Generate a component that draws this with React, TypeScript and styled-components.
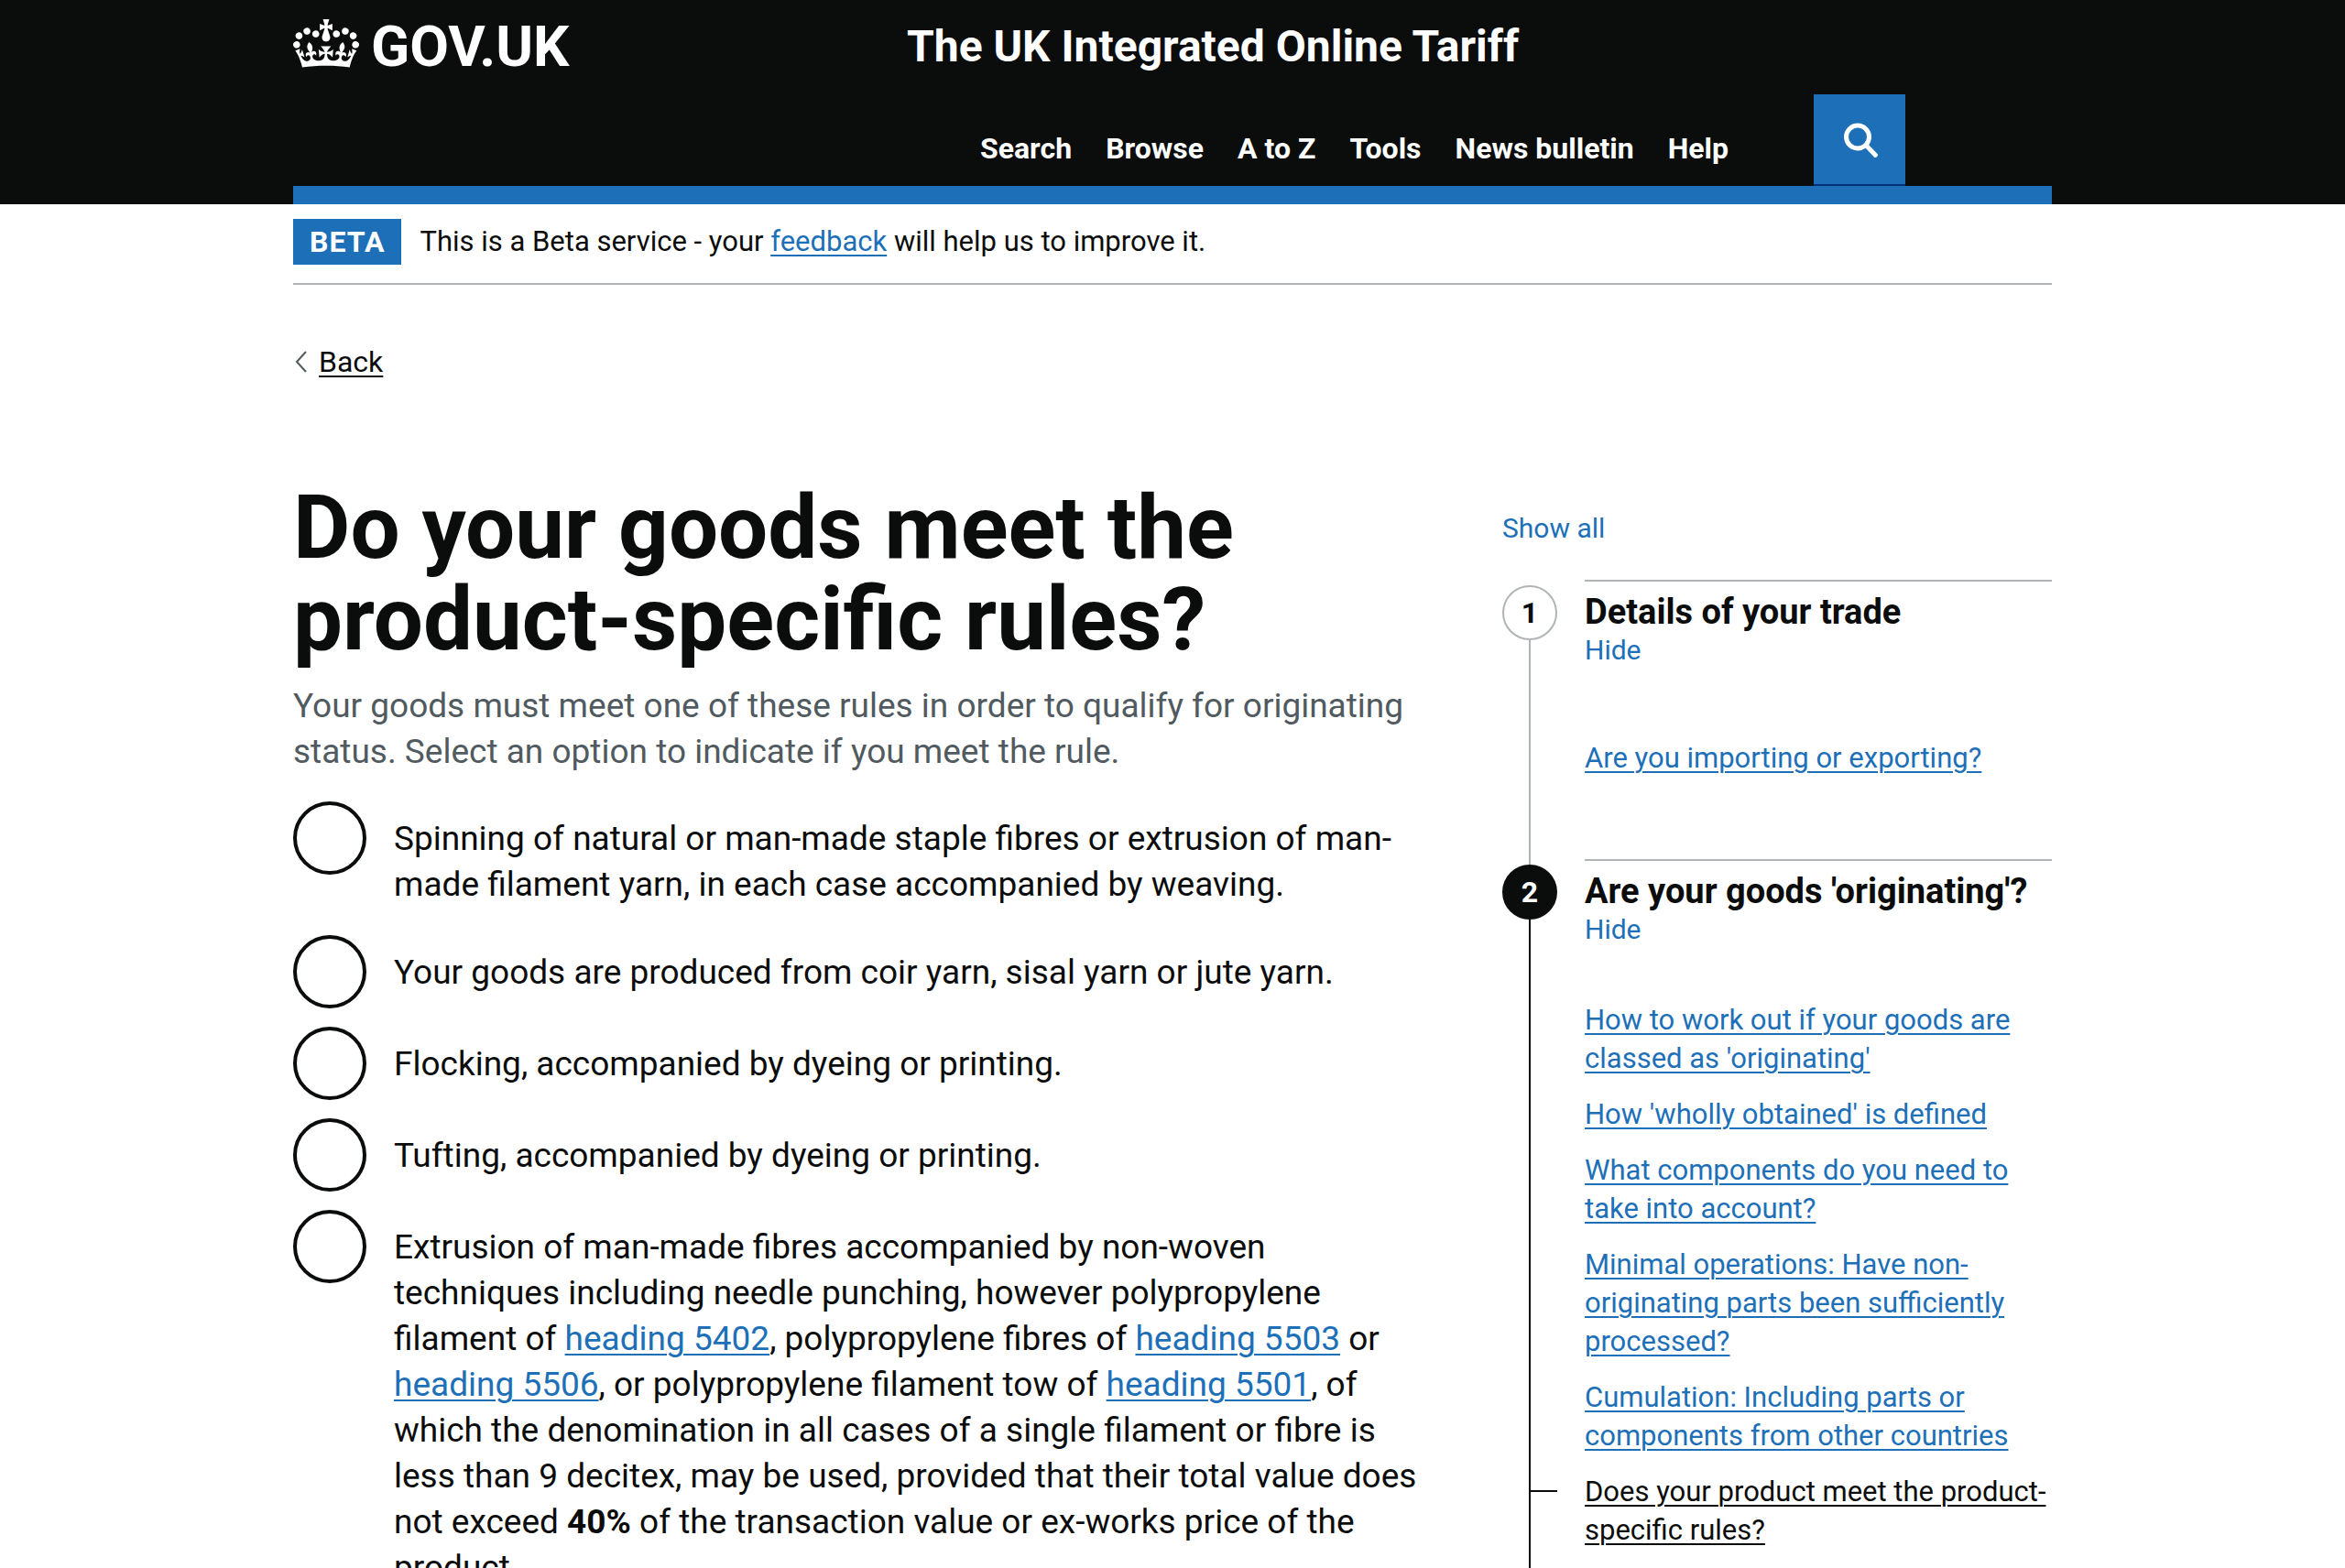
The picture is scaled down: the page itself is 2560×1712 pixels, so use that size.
import React from "react";
import styled, { createGlobalStyle } from "styled-components";

const colour = {
  black: "#0b0c0c",
  blue: "#1d70b8",
  darkBlue: "#003078",
  grey: "#b1b4b6",
  secondary: "#505a5f",
  white: "#ffffff",
};

const GlobalStyle = createGlobalStyle`
  *, *::before, *::after { box-sizing: border-box; }
  body {
    margin: 0;
    background: ${colour.white};
    color: ${colour.black};
    font-family: Roboto, "Liberation Sans", sans-serif;
    font-size: 31px;
    line-height: 42px;
  }
  h1, h2, p, ul, ol { margin: 0; padding: 0; }
  ul, ol { list-style: none; }
  button { font-family: inherit; border: 0; background: none; padding: 0; cursor: pointer; }
`;

const Container = styled.div`
  max-width: 1920px;
  margin: 0 auto;
`;

const Link = styled.a<{ $plain?: boolean }>`
  color: ${(p) => (p.$plain ? colour.black : colour.blue)};
  text-decoration: underline;
  text-decoration-thickness: 2px;
  text-underline-offset: 4px;
`;

/* Header */

const Header = styled.header`
  background: ${colour.black};
  color: ${colour.white};
`;

const HeaderBody = styled(Container)`
  display: grid;
  grid-template-columns: 670px 1fr;
  padding-top: 21px;
  border-bottom: 20px solid ${colour.blue};
`;

const Logo = styled.a`
  display: flex;
  align-items: flex-start;
  align-self: start;
  gap: 13px;
  color: inherit;
  text-decoration: none;
  font-size: 62px;
  line-height: 60px;
  font-weight: 700;
`;

const Crown = styled.svg`
  width: 72px;
  height: 53px;
  fill: currentColor;
`;

const ServiceName = styled.a`
  display: block;
  color: inherit;
  text-decoration: none;
  font-size: 48px;
  line-height: 60px;
  font-weight: 700;
`;

const NavRow = styled.div`
  display: flex;
  align-items: flex-end;
  justify-content: space-between;
  margin-top: 22px;
  padding: 0 160px 0 80px;
`;

const NavList = styled.ul`
  display: flex;
  gap: 37px;
  padding-bottom: 21px;
`;

const NavLink = styled.a`
  display: block;
  color: inherit;
  text-decoration: none;
  font-size: 32px;
  font-weight: 700;
  line-height: 40px;
  white-space: nowrap;
`;

const SearchButton = styled.button`
  display: flex;
  align-items: center;
  justify-content: center;
  width: 100px;
  height: 100px;
  background: ${colour.blue};
  color: ${colour.white};
  border-bottom: 2px solid ${colour.darkBlue};
`;

/* Phase banner and back link */

const PhaseBanner = styled.div`
  display: flex;
  align-items: center;
  gap: 20px;
  padding: 16px 0 20px;
  border-bottom: 2px solid ${colour.grey};
  line-height: 50px;
`;

const PhaseTag = styled.strong`
  padding: 0 18px;
  background: ${colour.blue};
  color: ${colour.white};
  font-size: 32px;
  font-weight: 700;
  letter-spacing: 1px;
  text-transform: uppercase;
`;

const BackLink = styled.a`
  display: inline-flex;
  align-items: center;
  gap: 12px;
  margin-top: 64px;
  color: ${colour.black};
  font-size: 32px;
  line-height: 40px;
  text-decoration: underline;
  text-decoration-thickness: 2px;
  text-underline-offset: 4px;
`;

const Chevron = styled.svg`
  width: 14px;
  height: 24px;
  margin-left: 2px;
  fill: none;
  stroke: ${colour.secondary};
  stroke-width: 2;
`;

/* Main columns */

const Columns = styled.div`
  display: grid;
  grid-template-columns: minmax(0, 21fr) minmax(0, 10fr);
  gap: 60px;
  padding: 108px 0 60px;
`;

const Heading = styled.h1`
  font-size: 96px;
  line-height: 100px;
  font-weight: 700;
`;

const Hint = styled.p`
  margin-top: 20px;
  color: ${colour.secondary};
  font-size: 37px;
  line-height: 50px;
`;

const RadioList = styled.div`
  display: flex;
  flex-direction: column;
  gap: 20px;
  margin-top: 29px;
`;

const RadioRow = styled.div`
  display: grid;
  grid-template-columns: 80px 1fr;
  gap: 30px;
  min-height: 80px;
`;

const Radio = styled.input`
  appearance: none;
  width: 80px;
  height: 80px;
  margin: 0;
  border: 4px solid ${colour.black};
  border-radius: 50%;
  background: ${colour.white};
  &:checked { box-shadow: inset 0 0 0 16px ${colour.white}; background: ${colour.black}; }
`;

const RadioLabel = styled.label`
  padding: 16px 30px 10px 0;
  font-size: 37px;
  line-height: 50px;
`;

/* Step navigation */

const Sidebar = styled.nav`
  padding-top: 33px;
`;

const TextButton = styled.button`
  display: block;
  color: ${colour.blue};
  font-size: 30px;
  line-height: 36px;
`;

const Steps = styled.ol`
  margin-top: 38px;
`;

const Step = styled.li`
  display: grid;
  grid-template-columns: 60px 1fr;
  gap: 30px;
`;

const Rail = styled.div`
  display: flex;
  flex-direction: column;
  align-items: center;
  margin: 6px 0 -6px;
`;

const StepNumber = styled.span<{ $active?: boolean }>`
  display: flex;
  align-items: center;
  justify-content: center;
  width: 60px;
  height: 60px;
  border: 2px solid ${(p) => (p.$active ? colour.black : colour.grey)};
  border-radius: 50%;
  background: ${(p) => (p.$active ? colour.black : colour.white)};
  color: ${(p) => (p.$active ? colour.white : colour.black)};
  font-size: 32px;
  font-weight: 700;
`;

const RailLine = styled.span<{ $active?: boolean }>`
  flex: 1;
  width: 2px;
  background: ${(p) => (p.$active ? colour.black : colour.grey)};
`;

const StepBody = styled.div`
  padding: 9px 0 89px;
  border-top: 2px solid ${colour.grey};
`;

const StepTitle = styled.h2`
  font-size: 38px;
  line-height: 48px;
  font-weight: 700;
`;

const StepLinks = styled.ul<{ $spaced?: boolean }>`
  display: flex;
  flex-direction: column;
  gap: 19px;
  padding-top: ${(p) => (p.$spaced ? 79 : 60)}px;
`;

const StepItem = styled.li<{ $current?: boolean }>`
  position: relative;
  &::before {
    content: "";
    display: ${(p) => (p.$current ? "block" : "none")};
    position: absolute;
    top: 19px;
    left: -60px;
    width: 30px;
    height: 2px;
    background: ${colour.black};
  }
`;

const navItems = ["Search", "Browse", "A to Z", "Tools", "News bulletin", "Help"];

const rules: React.ReactNode[] = [
  "Spinning of natural or man-made staple fibres or extrusion of man-made filament yarn, in each case accompanied by weaving.",
  "Your goods are produced from coir yarn, sisal yarn or jute yarn.",
  "Flocking, accompanied by dyeing or printing.",
  "Tufting, accompanied by dyeing or printing.",
  <>
    Extrusion of man-made fibres accompanied by non-woven techniques including needle punching,
    however polypropylene filament of <Link href="#5402">heading 5402</Link>, polypropylene fibres
    of <Link href="#5503">heading 5503</Link> or <Link href="#5506">heading 5506</Link>, or
    polypropylene filament tow of <Link href="#5501">heading 5501</Link>, of which the denomination
    in all cases of a single filament or fibre is less than 9 decitex, may be used, provided that
    their total value does not exceed <strong>40%</strong> of the transaction value or ex-works
    price of the product.
  </>,
];

const steps = [
  { title: "Details of your trade", active: false, links: ["Are you importing or exporting?"] },
  {
    title: "Are your goods 'originating'?",
    active: true,
    links: [
      "How to work out if your goods are classed as 'originating'",
      "How 'wholly obtained' is defined",
      "What components do you need to take into account?",
      "Minimal operations: Have non-originating parts been sufficiently processed?",
      "Cumulation: Including parts or components from other countries",
      "Does your product meet the product-specific rules?",
    ],
  },
];

const currentPage = "Does your product meet the product-specific rules?";

const CrownIcon = () => (
  <Crown viewBox="0 0 132 97" aria-hidden="true">
    <path d="M25 30.2c3.5 1.5 7.7-.2 9.1-3.7 1.5-3.6-.2-7.8-3.9-9.2-3.6-1.4-7.6.3-9.1 3.9-1.4 3.5.3 7.5 3.9 9zM9 39.5c3.6 1.5 7.8-.2 9.2-3.7 1.5-3.6-.2-7.8-3.9-9.1-3.6-1.5-7.6.2-9.1 3.8-1.4 3.5.3 7.5 3.8 9zM4.4 57.2c3.5 1.5 7.7-.2 9.1-3.8 1.5-3.6-.2-7.7-3.9-9.1-3.5-1.5-7.6.3-9.1 3.8-1.4 3.5.3 7.6 3.9 9.1zm38.3-21.4c3.5 1.5 7.7-.2 9.1-3.8 1.5-3.6-.2-7.7-3.9-9.1-3.6-1.5-7.6.3-9.1 3.8-1.3 3.6.4 7.7 3.9 9.1zm64.4-5.6c-3.6 1.5-7.8-.2-9.1-3.7-1.5-3.6.2-7.8 3.8-9.2 3.6-1.4 7.7.3 9.2 3.9 1.3 3.5-.4 7.5-3.9 9zm15.9 9.3c-3.6 1.5-7.7-.2-9.1-3.7-1.5-3.6.2-7.8 3.7-9.1 3.6-1.5 7.7.2 9.2 3.8 1.5 3.5-.3 7.5-3.8 9zm4.7 17.7c-3.6 1.5-7.8-.2-9.2-3.8-1.5-3.6.2-7.7 3.9-9.1 3.6-1.5 7.7.3 9.2 3.8 1.3 3.5-.4 7.6-3.9 9.1zM89.3 35.8c-3.6 1.5-7.8-.2-9.2-3.8-1.4-3.6.2-7.7 3.9-9.1 3.6-1.5 7.7.3 9.2 3.8 1.4 3.6-.3 7.7-3.9 9.1zM69.7 17.7l8.9 4.7V9.3l-8.9 2.8c-.2-.3-.5-.6-.9-.9L72.4 0H59.6l3.5 11.2c-.3.3-.6.5-.9.9l-8.8-2.8v13.1l8.8-4.7c.3.3.6.7.9.9l-5 15.4v.1c-.2.8-.4 1.6-.4 2.4 0 4.1 3.1 7.5 7 8.1h.2c.3 0 .7.1 1 .1.4 0 .7 0 1-.1h.2c4-.6 7.1-4.1 7.1-8.1 0-.8-.1-1.7-.4-2.4V34l-5.1-15.4c.4-.2.7-.6 1-.9zM66 92.8c16.9 0 32.8 1.1 47.1 3.2 4-16.9 8.9-26.7 14-33.5l-9.6-3.4c1 4.9 1.1 7.2 0 10.2-1.5-1.4-3-4.3-4.2-8.7L108.6 76c2.8-2 5-3.2 7.5-3.3-4.4 9.4-10 11.9-13.6 11.2-4.3-.8-6.3-4.6-5.6-7.9 1-4.7 5.7-5.9 8-.5 4.3-8.7-3-11.4-7.6-8.8 7.1-7.2 7.9-13.5 2.1-21.1-8 6.1-8.1 12.3-4.5 20.8-4.7-5.4-12.1-2.5-9.5 6.2 3.4-5.2 7.9-2 7.2 3.1-.6 4.3-6.4 7.8-13.5 7.2-10.3-.9-10.9-8-11.2-13.8 2.5-.5 7.1 1.8 11 7.3L80.2 60c-4.1 4.4-8 5.3-12.3 5.4 1.4-4.4 8-11.6 8-11.6H55.5s6.4 7.2 7.9 11.6c-4.2-.1-8-1-12.3-5.4l1.4 16.4c3.9-5.5 8.5-7.7 10.9-7.3-.3 5.8-.9 12.8-11.1 13.8-7.2.6-12.9-2.9-13.5-7.2-.7-5 3.8-8.3 7.1-3.1 2.7-8.7-4.6-11.6-9.4-6.2 3.7-8.5 3.6-14.7-4.6-20.8-5.8 7.6-5 13.9 2.2 21.1-4.7-2.6-11.9.1-7.7 8.8 2.3-5.5 7.1-4.2 8.1.5.7 3.3-1.3 7.1-5.7 7.9-3.5.7-9-1.8-13.5-11.2 2.5.1 4.7 1.3 7.5 3.3l-4.7-15.4c-1.2 4.4-2.7 7.2-4.3 8.7-1.1-3-.9-5.3 0-10.2l-9.5 3.4c5 6.9 9.9 16.7 14 33.5 14.8-2.1 30.8-3.2 47.7-3.2z" />
  </Crown>
);

export default function App() {
  return (
    <>
      <GlobalStyle />
      <Header>
        <HeaderBody>
          <Logo href="#home">
            <CrownIcon />
            GOV.UK
          </Logo>
          <div>
            <ServiceName href="#service">The UK Integrated Online Tariff</ServiceName>
            <NavRow>
              <NavList>
                {navItems.map((item) => (
                  <li key={item}>
                    <NavLink href="#nav">{item}</NavLink>
                  </li>
                ))}
              </NavList>
              <SearchButton type="button" aria-label="Search">
                <svg width="40" height="40" viewBox="0 0 40 40" fill="none" stroke="currentColor" strokeWidth="5">
                  <circle cx="18" cy="17.5" r="12.5" />
                  <path d="M27 26.5 39 39" />
                </svg>
              </SearchButton>
            </NavRow>
          </div>
        </HeaderBody>
      </Header>
      <Container>
        <PhaseBanner>
          <PhaseTag>Beta</PhaseTag>
          <span>
            This is a Beta service - your <Link href="#feedback">feedback</Link> will help us to
            improve it.
          </span>
        </PhaseBanner>
        <BackLink href="#back">
          <Chevron viewBox="0 0 14 24" aria-hidden="true">
            <path d="M12 1 2 12l10 11" />
          </Chevron>
          Back
        </BackLink>
        <Columns>
          <main>
            <Heading>Do your goods meet the product-specific rules?</Heading>
            <Hint>
              Your goods must meet one of these rules in order to qualify for originating status.
              Select an option to indicate if you meet the rule.
            </Hint>
            <RadioList>
              {rules.map((rule, i) => (
                <RadioRow key={i}>
                  <Radio type="radio" name="rule" id={`rule-${i}`} />
                  <RadioLabel htmlFor={`rule-${i}`}>{rule}</RadioLabel>
                </RadioRow>
              ))}
            </RadioList>
          </main>
          <Sidebar aria-label="Steps">
            <TextButton type="button">Show all</TextButton>
            <Steps>
              {steps.map((step, i) => (
                <Step key={step.title}>
                  <Rail>
                    <StepNumber $active={step.active}>{i + 1}</StepNumber>
                    <RailLine $active={step.active} />
                  </Rail>
                  <StepBody>
                    <StepTitle>{step.title}</StepTitle>
                    <TextButton type="button">Hide</TextButton>
                    <StepLinks $spaced={!step.active}>
                      {step.links.map((text) => (
                        <StepItem key={text} $current={text === currentPage}>
                          <Link href="#step" $plain={text === currentPage}>
                            {text}
                          </Link>
                        </StepItem>
                      ))}
                    </StepLinks>
                  </StepBody>
                </Step>
              ))}
            </Steps>
          </Sidebar>
        </Columns>
      </Container>
    </>
  );
}
